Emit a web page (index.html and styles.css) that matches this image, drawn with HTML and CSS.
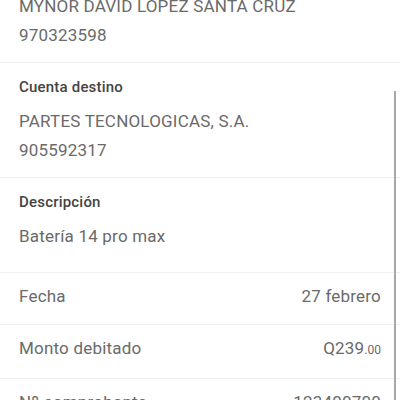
FILE: index.html
```html
<!DOCTYPE html>
<html lang="es">
<head>
  <meta charset="UTF-8">
  <meta name="viewport" content="width=device-width, initial-scale=1.0">
  <title>Detalle de transferencia</title>
  <link rel="stylesheet" href="styles.css">
</head>
<body>
  <div class="detail">
    <!-- Cuenta origen (cut off on top) -->
    <div class="section first">
      <p class="value">MYNOR DAVID LOPEZ SANTA CRUZ</p>
      <p class="value">970323598</p>
    </div>

    <div class="section">
      <p class="label">Cuenta destino</p>
      <p class="value">PARTES TECNOLOGICAS, S.A.</p>
      <p class="value">905592317</p>
    </div>

    <div class="section desc">
      <p class="label">Descripción</p>
      <p class="value">Batería 14 pro max</p>
    </div>

    <div class="row">
      <span>Fecha</span>
      <span>27 febrero</span>
    </div>
    <div class="row">
      <span>Monto debitado</span>
      <span>Q239<small>.00</small></span>
    </div>
    <div class="row">
      <span>Nº comprobante</span>
      <span>123400700</span>
    </div>
  </div>

  <div class="scrollbar"></div>
</body>
</html>
```

FILE: styles.css
```css
/* Global */
body {
  margin: 0;
  padding: 0;
  background-color: #ffffff;
  font-family: Roboto, "Liberation Sans", sans-serif;
  color: #6a6a6a;
  letter-spacing: 0.2px;
  height: 400px;
  overflow: hidden;
}

p {
  margin: 0;
}

.detail {
  margin-top: -8px;
}

/* Blocks with label + values */
.section {
  padding: 14px 19px 12px;
  border-bottom: 1px solid #efefef;
}

.section.first {
  padding-top: 0;
}

.section.desc {
  padding-bottom: 21px;
}

.label {
  font-size: 15px;
  font-weight: 500;
  line-height: 20px;
  color: #444444;
  margin-bottom: 10px;
}

.value {
  font-size: 17px;
  line-height: 29px;
}

/* Single line rows */
.row {
  display: flex;
  justify-content: space-between;
  padding: 9px 19px 13px;
  font-size: 17px;
  line-height: 29px;
  border-bottom: 1px solid #efefef;
}

.row small {
  font-size: 12px;
  letter-spacing: 0;
}

/* Fake scroll indicator */
.scrollbar {
  position: fixed;
  top: 91px;
  right: 4px;
  width: 2px;
  height: 320px;
  background-color: #a8a8a8;
}
```
